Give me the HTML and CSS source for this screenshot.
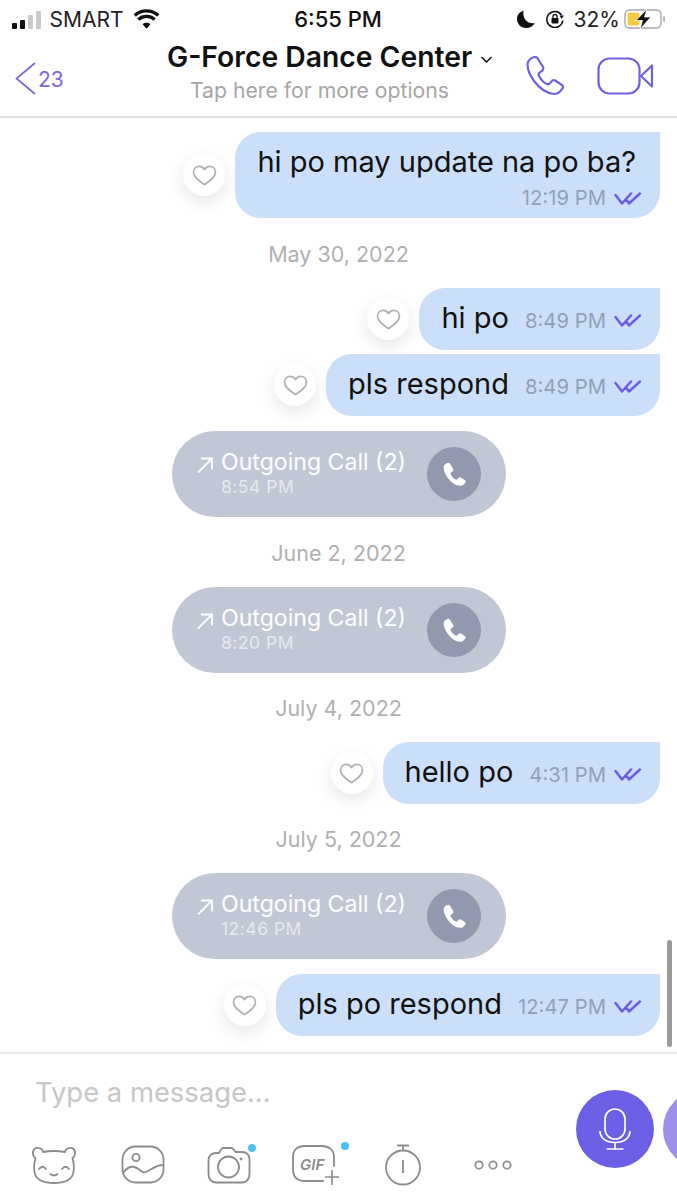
FILE: index.html
```html
<!DOCTYPE html>
<html lang="en">
<head>
    <meta charset="UTF-8">
    <meta name="viewport" content="width=device-width, initial-scale=1.0">
    <title>G-Force Dance Center</title>
    <link rel="stylesheet" href="styles.css">
</head>
<body>
    <svg class="defs">
        <defs>
            <symbol id="heart" viewBox="0 0 26 22">
                <path d="M13 20.5C8 17 1.5 13 1.5 7.5C1.500 3.500 4.500 1.500 7.500 1.500C10 1.500 12 2.800 13 4.800C14 2.800 16 1.500 18.500 1.500C21.500 1.500 24.500 3.500 24.500 7.500C24.500 13 18 17 13 20.500Z" fill="none" stroke="#b0b0b0" stroke-width="1.800" stroke-linejoin="round"/>
            </symbol>
            <symbol id="ticks" viewBox="0 0 28 15">
                <path d="M1.500 4L8 12.500L17 2.500M12.500 9L15 12.500L26 2.500" fill="none" stroke="#6a5ce6" stroke-width="2.400" stroke-linecap="round" stroke-linejoin="round"/>
            </symbol>
            <symbol id="handset" viewBox="0 0 40 40">
                <path d="M3 6Q5 2 10 1Q12 1 13 3L18 11Q19 13 17 15L14 17Q13 18 14 20Q18 27 22 28Q24 29 26 26Q28 23 31 25L37 29Q39 31 37 33Q34 38 29 38Q18 37 9 25Q1 14 3 6Z"/>
            </symbol>
            <symbol id="arrow" viewBox="0 0 18 18">
                <path d="M2 16.500L16 2.500M5 2.500H16V13.500" fill="none" stroke="#fff" stroke-width="1.800"/>
            </symbol>
        </defs>
    </svg>

    <div class="app">
        <div class="status-bar">
            <div class="status-left">
                <div class="signal">
                    <span class="bar b1"></span>
                    <span class="bar b2"></span>
                    <span class="bar b3"></span>
                    <span class="bar b4"></span>
                </div>
                <span class="carrier">SMART</span>
                <svg class="wifi" viewBox="0 0 28 20">
                    <path d="M14 20L10 15.500C12.300 13.500 15.700 13.500 18 15.500Z" fill="#111"/>
                    <path d="M5.500 10.500C10.300 6.300 17.700 6.300 22.500 10.500M1.800 6.300C8.800 0 19.200 0 26.200 6.300" fill="none" stroke="#111" stroke-width="3.400"/>
                </svg>
            </div>
            <div class="status-time">6:55 PM</div>
            <div class="status-right">
                <svg class="moon" viewBox="0 0 18 18">
                    <path d="M6.500 0.500C2.500 2 0 5 0 9C0 14 4 18 9 18C13 18 16 16 18 13C12 14.500 5 10 6.500 0.500Z" fill="#111"/>
                </svg>
                <svg class="lock" viewBox="0 0 18 18">
                    <path d="M15.500 5A8 8 0 1 0 16.800 10.500" fill="none" stroke="#111" stroke-width="1.600"/>
                    <path d="M13.500 5.500H18L15.500 9Z" fill="#111"/>
                    <rect x="5.500" y="8" width="7" height="5.500" rx="1" fill="#111"/>
                    <path d="M7 8V6.500A2 2 0 0 1 11 6.500V8" fill="none" stroke="#111" stroke-width="1.300"/>
                </svg>
                <span class="percent">32%</span>
                <svg class="battery" viewBox="0 0 42 20">
                    <rect x="1" y="1" width="36" height="18" rx="4.500" fill="#fff" stroke="#a8a8a8" stroke-width="1.400"/>
                    <rect x="3.500" y="3.500" width="12" height="13" rx="2" fill="#f5cb45"/>
                    <rect x="39" y="7" width="2" height="6" rx="1" fill="#b5b5b5"/>
                    <path d="M23 0L12 11.500H18.500L16 20L27 8H20.500Z" fill="#111" stroke="#fff" stroke-width="0.800"/>
                </svg>
            </div>
        </div>

        <div class="header">
            <div class="back">
                <svg class="chevron" viewBox="0 0 21 33">
                    <path d="M20 1L1.500 16.500L20 32" fill="none" stroke="#7b68e0" stroke-width="1.700"/>
                </svg>
                <span>23</span>
            </div>
            <div class="title-block">
                <div class="title">G-Force Dance Center
                    <svg class="caret" viewBox="0 0 12 7"><path d="M1 1L6 6L11 1" fill="none" stroke="#111" stroke-width="1.500"/></svg>
                </div>
                <div class="subtitle">Tap here for more options</div>
            </div>
            <div class="header-actions">
                <svg class="phone-icon"><use href="#handset"/></svg>
                <svg class="video-icon" viewBox="0 0 57 38">
                    <rect x="1.500" y="1.500" width="41" height="35" rx="11" fill="none" stroke="#6f62e0" stroke-width="2.200"/>
                    <path d="M55 8.500V29.500L44 19Z" fill="none" stroke="#6f62e0" stroke-width="2.200" stroke-linejoin="round"/>
                </svg>
            </div>
        </div>

        <div class="messages">
            <div class="row">
                <div class="like"><svg><use href="#heart"/></svg></div>
                <div class="bubble tall">
                    <div class="text">hi po may update na po ba?</div>
                    <div class="meta"><span class="time">12:19 PM</span><svg class="tick"><use href="#ticks"/></svg></div>
                </div>
            </div>

            <div class="date">May 30, 2022</div>

            <div class="row">
                <div class="like"><svg><use href="#heart"/></svg></div>
                <div class="bubble">
                    <div class="text">hi po</div>
                    <div class="meta"><span class="time">8:49 PM</span><svg class="tick"><use href="#ticks"/></svg></div>
                </div>
            </div>
            <div class="row close">
                <div class="like"><svg><use href="#heart"/></svg></div>
                <div class="bubble">
                    <div class="text">pls respond</div>
                    <div class="meta"><span class="time">8:49 PM</span><svg class="tick"><use href="#ticks"/></svg></div>
                </div>
            </div>

            <div class="call spaced">
                <svg class="call-arrow"><use href="#arrow"/></svg>
                <div class="call-info">
                    <div class="call-name">Outgoing Call (2)</div>
                    <div class="call-time">8:54 PM</div>
                </div>
                <div class="call-btn"><svg><use href="#handset"/></svg></div>
            </div>

            <div class="date">June 2, 2022</div>

            <div class="call">
                <svg class="call-arrow"><use href="#arrow"/></svg>
                <div class="call-info">
                    <div class="call-name">Outgoing Call (2)</div>
                    <div class="call-time">8:20 PM</div>
                </div>
                <div class="call-btn"><svg><use href="#handset"/></svg></div>
            </div>

            <div class="date short">July 4, 2022</div>

            <div class="row">
                <div class="like"><svg><use href="#heart"/></svg></div>
                <div class="bubble">
                    <div class="text">hello po</div>
                    <div class="meta"><span class="time">4:31 PM</span><svg class="tick"><use href="#ticks"/></svg></div>
                </div>
            </div>

            <div class="date short">July 5, 2022</div>

            <div class="call">
                <svg class="call-arrow"><use href="#arrow"/></svg>
                <div class="call-info">
                    <div class="call-name">Outgoing Call (2)</div>
                    <div class="call-time">12:46 PM</div>
                </div>
                <div class="call-btn"><svg><use href="#handset"/></svg></div>
            </div>

            <div class="row spaced">
                <div class="like"><svg><use href="#heart"/></svg></div>
                <div class="bubble">
                    <div class="text">pls po respond</div>
                    <div class="meta"><span class="time">12:47 PM</span><svg class="tick"><use href="#ticks"/></svg></div>
                </div>
            </div>

            <div class="scrollbar"></div>
        </div>

        <div class="composer">
            <div class="composer-main">
                <div class="placeholder">Type a message...</div>
                <div class="tools">
                    <svg class="tool" width="44" height="40" viewBox="0 0 44 40">
                        <path d="M11 7Q22 5 33 7C34 2 42 1 43 7C43.500 10 42 12 40.500 13Q43 22 41 29Q38 38 22 38Q6 38 3 29Q1 22 3.500 13C2 12 0.500 10 1 7C2 1 10 2 11 7Z" fill="none" stroke="#8c8c8c" stroke-width="1.800" stroke-linejoin="round"/>
                        <path d="M7 24Q10.500 19.500 14 24M30 24Q33.500 19.500 37 24M18.500 29Q22 32 25.500 29" fill="none" stroke="#8c8c8c" stroke-width="1.800" stroke-linecap="round"/>
                    </svg>
                    <svg class="tool" width="44" height="40" viewBox="0 0 44 40">
                        <rect x="1.500" y="1.500" width="41" height="36" rx="13" fill="none" stroke="#8c8c8c" stroke-width="1.800"/>
                        <circle cx="15" cy="12.500" r="3.600" fill="none" stroke="#8c8c8c" stroke-width="1.800"/>
                        <path d="M2 28C8 20 13 20 20 26C26 31 31 20 42 20" fill="none" stroke="#8c8c8c" stroke-width="1.800"/>
                    </svg>
                    <div class="tool-wrap">
                        <svg class="tool" width="44" height="38" viewBox="0 0 44 38">
                            <path d="M12 7L14 3.500C14.500 2.500 15.500 2 16.500 2H24C25 2 26 2.500 26.500 3.500L28.500 6H35C39.500 6 42.500 9 42.500 13V28C42.500 33 39.500 36.500 35 36.500H9C4.500 36.500 1.500 33 1.500 28V14C1.500 10 4.500 7 9 7Z" fill="none" stroke="#8c8c8c" stroke-width="1.800" stroke-linejoin="round"/>
                            <circle cx="21.500" cy="21" r="10.500" fill="none" stroke="#8c8c8c" stroke-width="1.800"/>
                            <circle cx="34" cy="13" r="1.400" fill="#8c8c8c"/>
                        </svg>
                        <span class="dot cam-dot"></span>
                    </div>
                    <div class="tool-wrap">
                        <svg class="tool" width="50" height="42" viewBox="0 0 50 42">
                            <path d="M43 22V13C43 6 38 2 31 2H14C6 2 2 6 2 13V25C2 33 6 37 14 37H32" fill="none" stroke="#8c8c8c" stroke-width="1.800" stroke-linecap="round"/>
                            <path d="M34 33H48M41 26V41" fill="none" stroke="#8c8c8c" stroke-width="1.600"/>
                            <text x="9" y="26" class="gif-label">GIF</text>
                        </svg>
                        <span class="dot gif-dot"></span>
                    </div>
                    <svg class="tool" width="38" height="42" viewBox="0 0 38 42">
                        <circle cx="19" cy="23.500" r="17" fill="none" stroke="#8c8c8c" stroke-width="1.800"/>
                        <path d="M13 1.500H25M19 1.500V6.500M19 16V29" fill="none" stroke="#8c8c8c" stroke-width="1.800"/>
                    </svg>
                    <svg class="tool" width="38" height="12" viewBox="0 0 38 12">
                        <circle cx="5" cy="6" r="3.700" fill="none" stroke="#8c8c8c" stroke-width="1.700"/>
                        <circle cx="19" cy="6" r="3.700" fill="none" stroke="#8c8c8c" stroke-width="1.700"/>
                        <circle cx="33" cy="6" r="3.700" fill="none" stroke="#8c8c8c" stroke-width="1.700"/>
                    </svg>
                </div>
            </div>
            <div class="round-buttons">
                <div class="mic-btn">
                    <svg width="32" height="42" viewBox="0 0 32 42">
                        <rect x="6" y="1" width="20" height="30" rx="10" fill="none" stroke="#fff" stroke-width="1.700"/>
                        <path d="M1 23C1 30 7 34.500 16 34.500C25 34.500 31 30 31 23M16 34.500V41M7.500 41H24.500" fill="none" stroke="#fff" stroke-width="1.700"/>
                    </svg>
                </div>
                <div class="next-btn"></div>
            </div>
        </div>
    </div>
</body>
</html>
```

FILE: styles.css
```css
html, body {
    margin: 0;
    padding: 0;
    height: 1200px;
    overflow: hidden;
    background: white;
}
body {
    font-family: Inter, "Noto Sans", sans-serif;
    color: #111;
}
.defs {
    display: none;
}
.app {
    width: 677px;
    height: 1200px;
    display: flex;
    flex-direction: column;
    overflow: hidden;
}

.status-bar {
    height: 38px;
    display: flex;
    align-items: center;
    position: relative;
    flex-shrink: 0;
}
.status-left {
    display: flex;
    align-items: center;
    margin-left: 12px;
}
.signal {
    display: flex;
    align-items: flex-end;
    gap: 2.500px;
    height: 19px;
}
.bar {
    width: 5px;
    border-radius: 1px;
    background: #111;
}
.b1 { height: 6px; }
.b2 { height: 9px; }
.b3 { height: 14px; background: #c9c9c9; margin-left: 1px; }
.b4 { height: 18px; background: #c9c9c9; }
.carrier {
    font-size: 21px;
    margin-left: 9px;
    color: #222;
}
.wifi {
    width: 27px;
    height: 20px;
    margin-left: 9px;
}
.status-time {
    flex: 1;
    text-align: center;
    font-size: 22px;
    font-weight: 500;
}
.status-right {
    display: flex;
    align-items: center;
    margin-right: 11px;
}
.moon {
    width: 18px;
    height: 18px;
}
.lock {
    width: 18px;
    height: 18px;
    margin-left: 11px;
}
.percent {
    font-size: 21px;
    margin-left: 10px;
    color: #222;
}
.battery {
    width: 42px;
    height: 20px;
    margin-left: 4px;
}

.header {
    height: 78px;
    border-bottom: 2px solid #e2e2e2;
    box-sizing: content-box;
    display: flex;
    position: relative;
    flex-shrink: 0;
    margin-bottom: -1px;
}
.back {
    display: flex;
    align-items: center;
    color: #7b68e0;
    font-size: 21px;
    margin-left: 15px;
    width: 152px;
    height: 78px;
    margin-top: 1px;
}
.back span {
    margin-left: 2px;
    margin-top: 3px;
}
.chevron {
    width: 21px;
    height: 33px;
}
.title-block {
    width: 340px;
}
.title {
    font-size: 28.300px;
    font-weight: 600;
    margin-top: 2px;
    white-space: nowrap;
    line-height: 34px;
}
.caret {
    width: 13px;
    height: 7px;
    margin-left: 1px;
    vertical-align: middle;
}
.subtitle {
    font-size: 21.200px;
    color: #a6a6a6;
    margin-top: 2px;
    margin-left: 23px;
    line-height: 28px;
}
.header-actions {
    display: flex;
    align-items: center;
    gap: 32px;
    margin-left: 18px;
    height: 76px;
}
.phone-icon {
    width: 40px;
    height: 40px;
    fill: none;
    stroke: #6f62e0;
    stroke-width: 2.200;
}
.video-icon {
    width: 57px;
    height: 38px;
}

.messages {
    height: 935px;
    position: relative;
    padding: 15px 17px 0 0;
    box-sizing: border-box;
    display: flex;
    flex-direction: column;
    align-items: flex-end;
    flex-shrink: 0;
}
.row {
    display: flex;
    align-items: center;
    gap: 10px;
}
.row.close {
    margin-top: 4px;
}
.row.spaced {
    margin-top: 15px;
}
.like {
    width: 42px;
    height: 42px;
    border-radius: 50%;
    background: white;
    box-shadow: 0 6px 16px rgba(0, 0, 0, 0.1);
    display: flex;
    align-items: center;
    justify-content: center;
}
.like svg {
    width: 25px;
    height: 21px;
}
.bubble {
    height: 62px;
    box-sizing: border-box;
    padding: 0 18px 0 22px;
    background: #cbdffa;
    border-radius: 26px 0 26px 26px;
    display: flex;
    align-items: center;
    gap: 16px;
}
.bubble.tall {
    height: 86px;
    display: block;
    padding: 11px 18px 0 22px;
}
.text {
    font-size: 29px;
    line-height: 38px;
    white-space: nowrap;
    margin-top: -3px;
}
.bubble.tall .text {
    margin-top: 0;
    margin-right: 6px;
}
.meta {
    display: flex;
    align-items: center;
    gap: 8px;
    padding-top: 2px;
}
.bubble.tall .meta {
    justify-content: flex-end;
    padding-top: 0;
    margin-top: 5px;
    line-height: 24px;
}
.time {
    font-size: 20.300px;
    color: #939fb8;
    white-space: nowrap;
}
.tick {
    width: 28px;
    height: 15px;
}
.date {
    width: 677px;
    margin-right: -17px;
    text-align: center;
    height: 70px;
    line-height: 72px;
    font-size: 21.500px;
    color: #b0b0b0;
    flex-shrink: 0;
}
.date.short {
    height: 69px;
    line-height: 71px;
}
.call {
    width: 334px;
    height: 86px;
    box-sizing: border-box;
    margin-right: 154px;
    background: #c2c7d5;
    border-radius: 43px;
    display: flex;
    align-items: center;
    padding: 0 25px 0 24px;
    flex-shrink: 0;
}
.call.spaced {
    margin-top: 15px;
}
.call-arrow {
    width: 18px;
    height: 18px;
    margin-right: 7px;
    margin-bottom: 18px;
    flex-shrink: 0;
}
.call-info {
    flex: 1;
    margin-top: -2px;
}
.call-name {
    font-size: 23.100px;
    color: white;
    line-height: 28px;
    white-space: nowrap;
}
.call-time {
    font-size: 17.500px;
    color: #e6e9f0;
    line-height: 22px;
    letter-spacing: 0.500px;
}
.call-btn {
    width: 54px;
    height: 54px;
    border-radius: 50%;
    background: #9298ad;
    display: flex;
    align-items: center;
    justify-content: center;
    flex-shrink: 0;
}
.call-btn svg {
    width: 25px;
    height: 25px;
    fill: white;
}
.scrollbar {
    position: absolute;
    left: 667px;
    top: 823px;
    width: 5px;
    height: 107px;
    border-radius: 3px;
    background: #9a9a9a;
}

.composer {
    flex: 1;
    border-top: 2px solid #e8e8e8;
    display: flex;
}
.composer-main {
    width: 576px;
    flex-shrink: 0;
}
.placeholder {
    font-size: 27.400px;
    color: #c6c6c6;
    margin: 21px 0 0 35px;
    line-height: 34px;
}
.tools {
    display: grid;
    grid-template-columns: 89px 86px 84px 93px 90px 38px;
    align-items: center;
    justify-items: start;
    margin: 34px 0 0 32px;
    height: 44px;
}
.tool {
    display: block;
}
.tool-wrap {
    position: relative;
}
.gif-label {
    font-size: 15px;
    font-weight: 600;
    font-style: italic;
    fill: #8c8c8c;
    font-family: Inter, sans-serif;
}
.dot {
    position: absolute;
    width: 8px;
    height: 8px;
    border-radius: 50%;
    background: #4fbdf2;
}
.cam-dot {
    top: -2px;
    left: 41px;
}
.gif-dot {
    top: -2px;
    left: 50px;
}
.round-buttons {
    display: flex;
    gap: 9px;
    margin-top: 36px;
    flex-shrink: 0;
}
.mic-btn, .next-btn {
    width: 78px;
    height: 78px;
    border-radius: 50%;
    background: #6d5ee6;
    flex-shrink: 0;
    display: flex;
    align-items: center;
    justify-content: center;
}
.next-btn {
    background: #9c90ea;
}
```
